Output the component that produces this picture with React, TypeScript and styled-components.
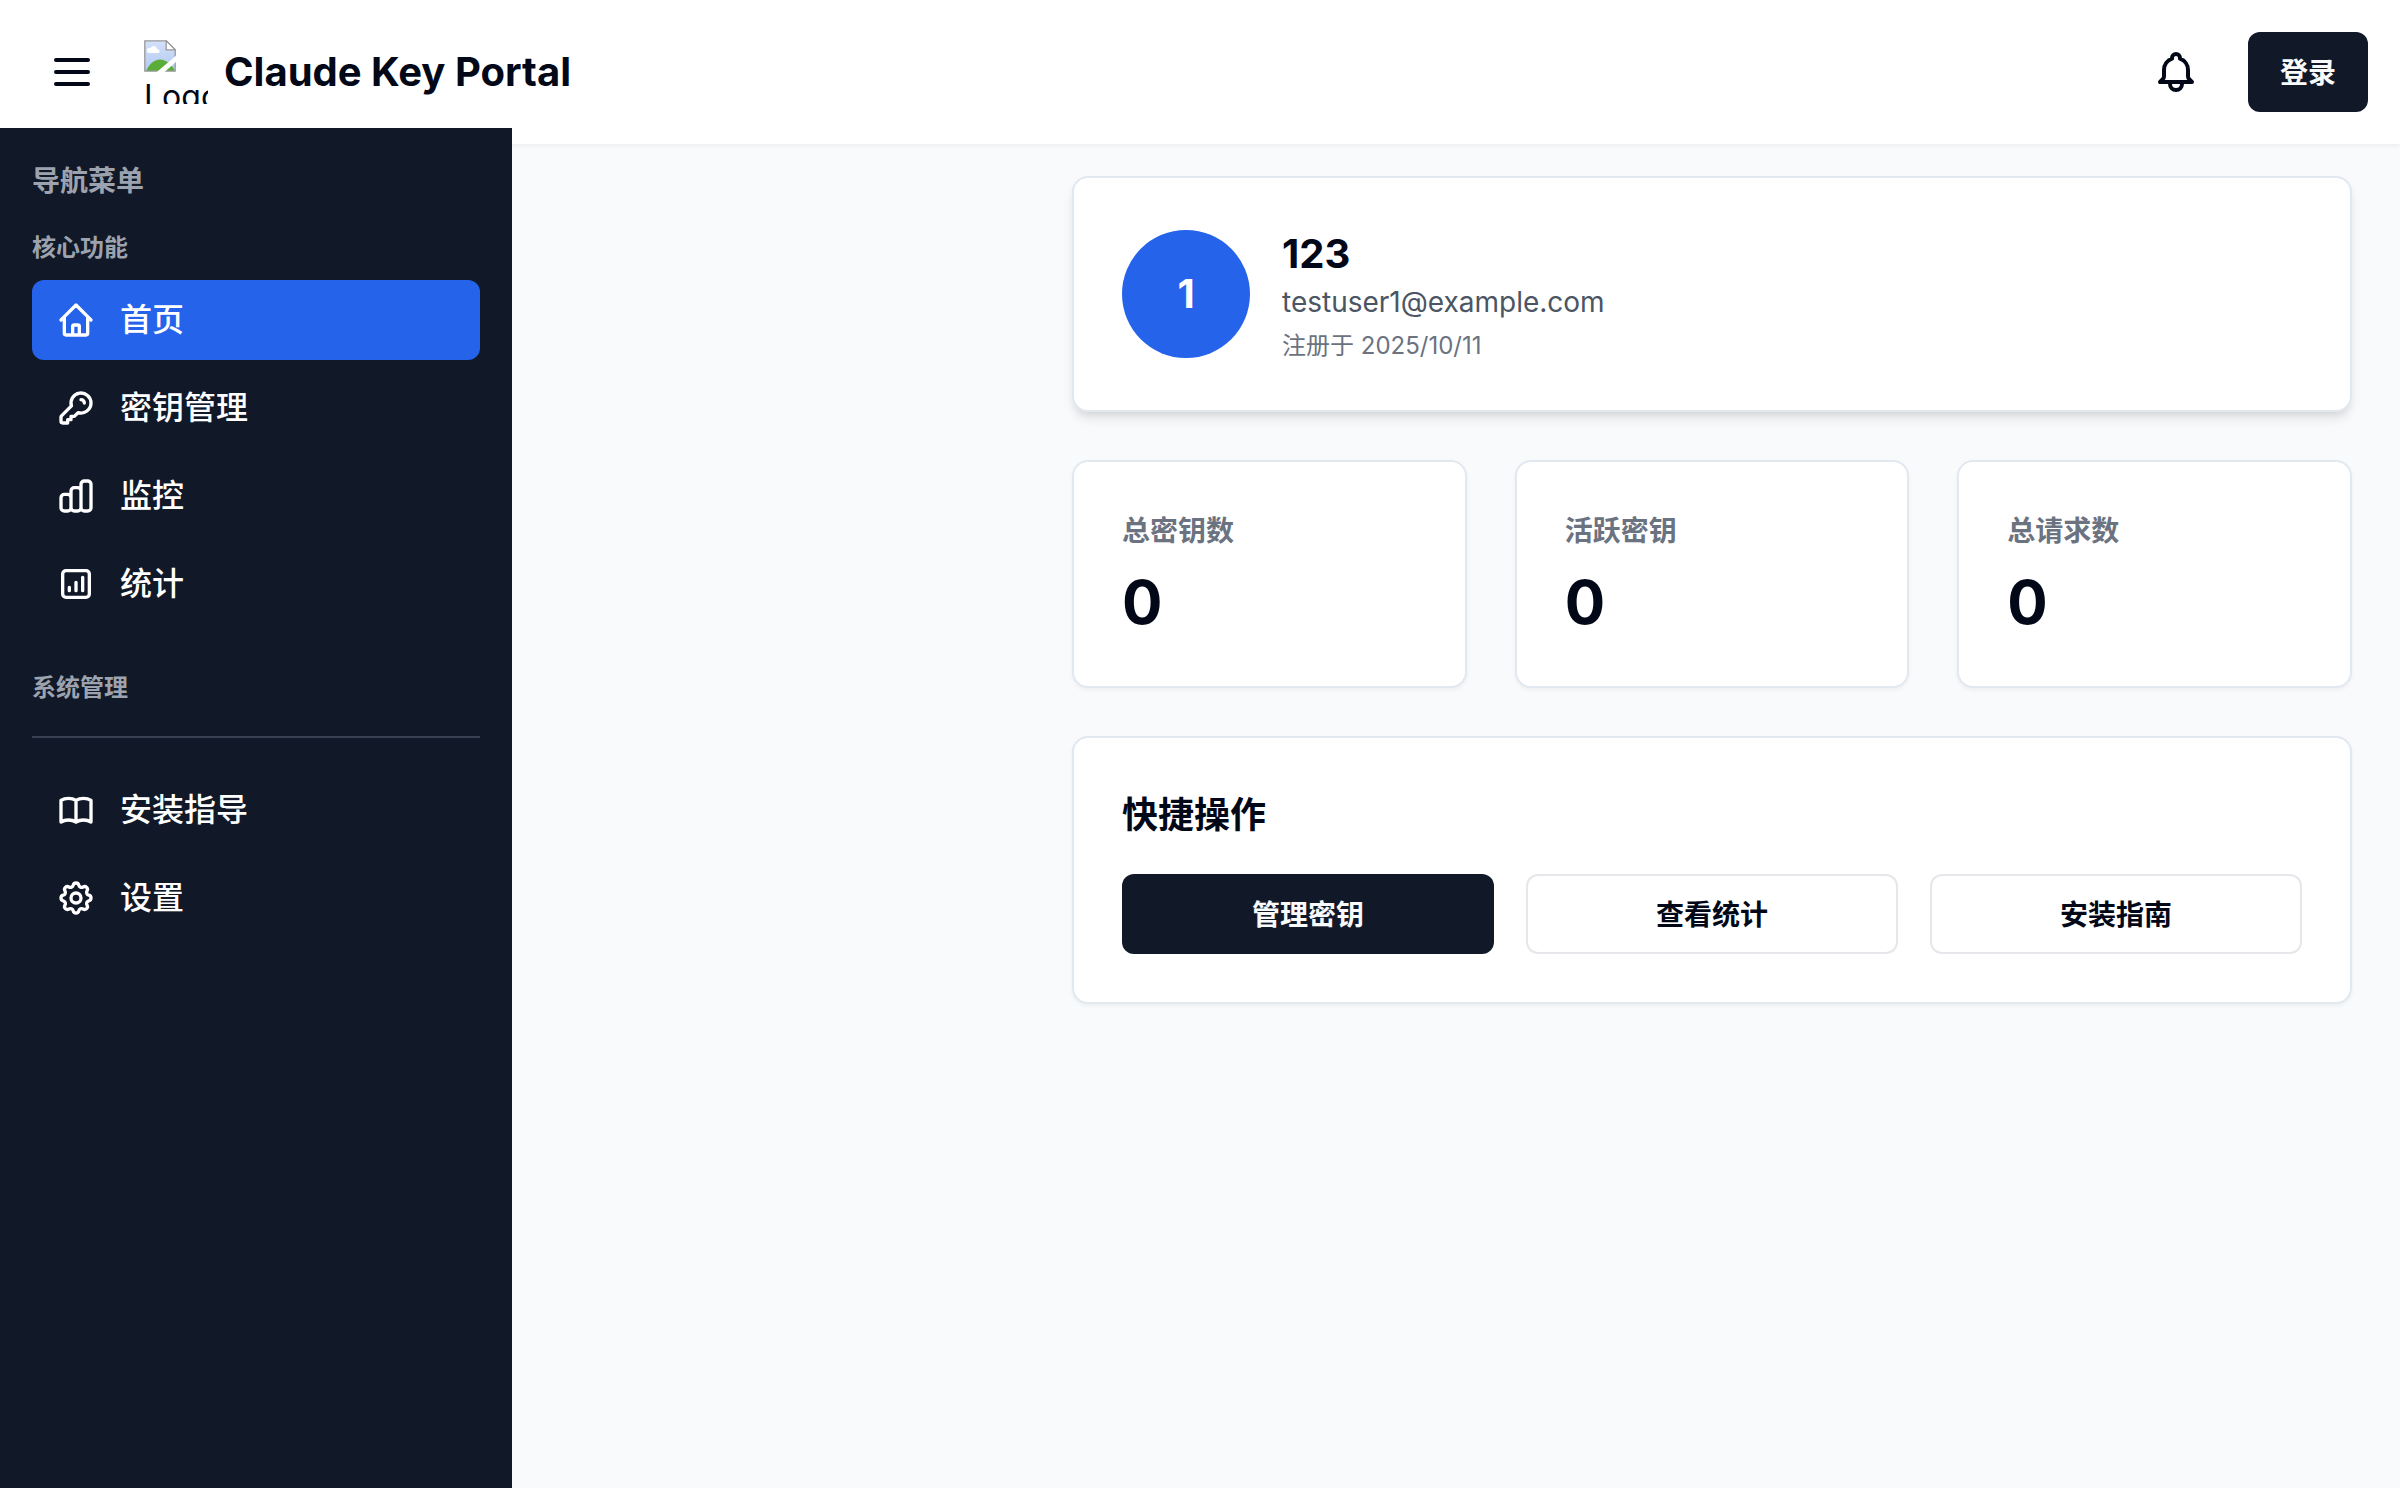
import React from "react";
import styled, { createGlobalStyle, css } from "styled-components";

const GlobalStyle = createGlobalStyle`
  *, *::before, *::after { box-sizing: border-box; }
  html, body { margin: 0; padding: 0; }
  body {
    background: #f9fafb;
    color: #020817;
    font-family: Inter, "Noto Sans CJK SC", sans-serif;
    font-size: 32px;
    line-height: 48px;
    -webkit-font-smoothing: antialiased;
  }
  h1, h2, p { margin: 0; }
  button { font-family: inherit; cursor: pointer; }
`;

const ICONS = {
  menu: "M4 6h16M4 12h16M4 18h16",
  bell: "M15 17h5l-1.405-1.405A2.032 2.032 0 0118 14.158V11a6.002 6.002 0 00-4-5.659V5a2 2 0 10-4 0v.341C7.67 6.165 6 8.388 6 11v3.159c0 .538-.214 1.055-.595 1.436L4 17h5m6 0v1a3 3 0 11-6 0v-1m6 0H9",
  home: "M3 12l2-2m0 0l7-7 7 7M5 10v10a1 1 0 001 1h3m10-11l2 2m-2-2v10a1 1 0 01-1 1h-3m-6 0a1 1 0 001-1v-4a1 1 0 011-1h2a1 1 0 011 1v4a1 1 0 001 1m-6 0h6",
  key: "M15 7a2 2 0 012 2m4 0a6 6 0 01-7.743 5.743L11 17H9v2H7v2H4a1 1 0 01-1-1v-2.586a1 1 0 01.293-.707l5.964-5.964A6 6 0 1121 9z",
  monitor:
    "M9 19v-6a2 2 0 00-2-2H5a2 2 0 00-2 2v6a2 2 0 002 2h2a2 2 0 002-2zm0 0V9a2 2 0 012-2h2a2 2 0 012 2v10m-6 0a2 2 0 002 2h2a2 2 0 002-2m0 0V5a2 2 0 012-2h2a2 2 0 012 2v14a2 2 0 01-2 2h-2a2 2 0 01-2-2z",
  stats:
    "M16 8v8m-4-5v5m-4-2v2m-2 4h12a2 2 0 002-2V6a2 2 0 00-2-2H6a2 2 0 00-2 2v12a2 2 0 002 2z",
  book: "M12 6.253v13m0-13C10.832 5.477 9.246 5 7.5 5S4.168 5.477 3 6.253v13C4.168 18.477 5.754 18 7.5 18s3.332.477 4.5 1.253m0-13C13.168 5.477 14.754 5 16.5 5c1.747 0 3.332.477 4.5 1.253v13C19.832 18.477 18.247 18 16.5 18c-1.746 0-3.332.477-4.5 1.253",
  settings:
    "M10.325 4.317c.426-1.756 2.924-1.756 3.35 0a1.724 1.724 0 002.573 1.066c1.543-.94 3.31.826 2.37 2.37a1.724 1.724 0 001.065 2.572c1.756.426 1.756 2.924 0 3.35a1.724 1.724 0 00-1.066 2.573c.94 1.543-.826 3.31-2.37 2.37a1.724 1.724 0 00-2.572 1.065c-.426 1.756-2.924 1.756-3.35 0a1.724 1.724 0 00-2.573-1.066c-1.543.94-3.31-.826-2.37-2.37a1.724 1.724 0 00-1.065-2.572c-1.756-.426-1.756-2.924 0-3.35a1.724 1.724 0 001.066-2.573c-.94-1.543.826-3.31 2.37-2.37.996.608 2.296.07 2.572-1.065z M15 12a3 3 0 11-6 0 3 3 0 016 0z",
};
type IconName = keyof typeof ICONS;

const IconSvg = styled.svg<{ $size: number }>`
  display: block;
  flex: none;
  width: ${(p) => p.$size}px;
  height: ${(p) => p.$size}px;
  fill: none;
  stroke: currentColor;
  stroke-width: 2;
  stroke-linecap: round;
  stroke-linejoin: round;
`;

const Icon = ({ name, size }: { name: IconName; size: number }) => (
  <IconSvg $size={size} viewBox="0 0 24 24" aria-hidden="true">
    <path d={ICONS[name]} />
  </IconSvg>
);

const Page = styled.div`
  display: flex;
  flex-direction: column;
  height: 1488px;
  overflow: hidden;
`;

const Header = styled.header`
  flex: none;
  display: flex;
  align-items: center;
  justify-content: space-between;
  height: 144px;
  padding: 0 32px;
  background: #fff;
  box-shadow: 0 2px 4px 0 rgba(0, 0, 0, 0.05);
`;

const HeaderGroup = styled.div`
  display: flex;
  align-items: center;
  gap: 32px;
`;

const IconButton = styled.button`
  display: flex;
  padding: 16px;
  border: 0;
  border-radius: 12px;
  background: transparent;
  color: inherit;
`;

const Brand = styled.div`
  display: flex;
  align-items: center;
  gap: 16px;
`;

const LogoBox = styled.div`
  display: flex;
  flex-direction: column;
  width: 64px;
  height: 64px;
  overflow: hidden;
`;

const LogoPicture = styled.svg`
  display: block;
  flex: none;
  width: 32px;
  height: 32px;
`;

const LogoAlt = styled.span`
  flex: none;
  margin-top: 1px;
  white-space: nowrap;
`;

const BrandName = styled.h1`
  font-size: 40px;
  line-height: 56px;
  font-weight: 700;
`;

const Button = styled.button<{ $primary?: boolean }>`
  display: flex;
  align-items: center;
  justify-content: center;
  height: 80px;
  padding: 2px 32px 0;
  border-radius: 12px;
  font-size: 28px;
  line-height: 40px;
  font-weight: 600;
  white-space: nowrap;
  ${(p) =>
    p.$primary
      ? css`
          border: 0;
          background: #111827;
          color: #f8fafc;
        `
      : css`
          border: 2px solid #e5e7eb;
          background: #fff;
          color: #020817;
        `}
`;

const Body = styled.div`
  flex: 1;
  display: flex;
  min-height: 0;
`;

const Sidebar = styled.aside`
  flex: none;
  display: flex;
  flex-direction: column;
  width: 512px;
  margin-top: -16px;
  padding: 33px 32px 32px;
  z-index: 1;
  background: #111827;
  color: #fff;
`;

const SidebarTitle = styled.h2`
  margin-bottom: 31px;
  font-size: 28px;
  line-height: 40px;
  font-weight: 600;
  color: #9ca3af;
`;

const SectionLabel = styled.p<{ $spaced?: boolean }>`
  margin: ${(p) => (p.$spaced ? "48px 0 32px" : "0 0 16px")};
  font-size: 24px;
  line-height: 32px;
  font-weight: 600;
  color: #9ca3af;
`;

const NavList = styled.nav`
  display: flex;
  flex-direction: column;
  gap: 8px;
`;

const NavItem = styled.a<{ $active?: boolean }>`
  display: flex;
  align-items: center;
  gap: 24px;
  height: 80px;
  padding: 0 24px;
  border-radius: 12px;
  background: ${(p) => (p.$active ? "#2563eb" : "transparent")};
  font-weight: 500;
`;

const Divider = styled.hr`
  width: 100%;
  height: 2px;
  margin: 0 0 32px;
  border: 0;
  background: #374151;
`;

const Main = styled.main`
  flex: 1;
  display: flex;
  justify-content: flex-end;
  padding: 32px 48px;
`;

const Content = styled.div`
  display: flex;
  flex-direction: column;
  gap: 48px;
  width: 1280px;
`;

const Card = styled.section<{ $raised?: boolean }>`
  padding: 48px;
  border: 2px solid #e2e8f0;
  border-radius: 16px;
  background: #fff;
  box-shadow: ${(p) =>
    p.$raised
      ? "0 8px 12px -2px rgba(0, 0, 0, 0.1), 0 4px 8px -4px rgba(0, 0, 0, 0.1)"
      : "0 2px 4px 0 rgba(0, 0, 0, 0.05)"};
`;

const Profile = styled.div`
  display: flex;
  align-items: center;
  gap: 32px;
`;

const Avatar = styled.div`
  display: flex;
  align-items: center;
  justify-content: center;
  width: 128px;
  height: 128px;
  border-radius: 50%;
  background: #2563eb;
  color: #fff;
  font-size: 40px;
  font-weight: 700;
`;

const UserName = styled.h2`
  font-size: 40px;
  line-height: 56px;
  font-weight: 700;
`;

const UserEmail = styled.p`
  font-size: 28px;
  line-height: 40px;
  color: #4b5563;
`;

const UserSince = styled.p`
  margin-top: 8px;
  font-size: 24px;
  line-height: 32px;
  color: #6b7280;
`;

const Grid = styled.div<{ $gap: number }>`
  display: grid;
  grid-template-columns: repeat(3, 1fr);
  gap: ${(p) => p.$gap}px;
`;

const StatLabel = styled.p`
  padding-top: 1px;
  font-size: 28px;
  line-height: 40px;
  font-weight: 600;
  color: #6b7280;
`;

const StatValue = styled.p`
  margin-top: 15px;
  font-size: 60px;
  line-height: 72px;
  font-weight: 700;
`;

const CardTitle = styled.h2`
  padding-top: 1px;
  margin-bottom: 31px;
  font-size: 36px;
  line-height: 56px;
  font-weight: 600;
`;

const coreItems: { icon: IconName; label: string; active?: boolean }[] = [
  { icon: "home", label: "首页", active: true },
  { icon: "key", label: "密钥管理" },
  { icon: "monitor", label: "监控" },
  { icon: "stats", label: "统计" },
];

const systemItems: { icon: IconName; label: string }[] = [
  { icon: "book", label: "安装指导" },
  { icon: "settings", label: "设置" },
];

const stats = [
  { label: "总密钥数", value: 0 },
  { label: "活跃密钥", value: 0 },
  { label: "总请求数", value: 0 },
];

const Logo = () => (
  <LogoBox>
    <LogoPicture viewBox="0 0 32 32" aria-hidden="true">
      <defs>
        <linearGradient id="sky" x1="0" y1="0" x2="0" y2="1">
          <stop offset="0" stopColor="#d3e1fb" />
          <stop offset="1" stopColor="#b3c9f0" />
        </linearGradient>
      </defs>
      <path d="M.8.8h21.4l9 9v21.4H.8z" fill="url(#sky)" />
      <path d="M2 31c3-6.500 8-11.500 14-11.500S28 24.500 31 31z" fill="#5aae38" />
      <path d="M5.500 13a2.500 2.500 0 01-.3-5c1.300-.2 2-.5 2.600-1.300C9 5.400 11.800 5.700 12.600 8c.3.900.9 1.200 1.800 1.500 2 .8 1.500 3.500-.6 3.500z" fill="#fff" />
      <path d="M.8.8h21.4l9 9v21.4H.8z" fill="none" stroke="#999" strokeWidth="1.300" />
      <path d="M22.200.8v9h9z" fill="#fff" stroke="#999" strokeWidth="1.300" />
      <path d="M12.800 32L32 15.800v6.200L20.500 32z" fill="#fff" />
    </LogoPicture>
    <LogoAlt>Logo</LogoAlt>
  </LogoBox>
);

export default function App() {
  return (
    <Page>
      <GlobalStyle />
      <Header>
        <HeaderGroup>
          <IconButton aria-label="菜单">
            <Icon name="menu" size={48} />
          </IconButton>
          <Brand>
            <Logo />
            <BrandName>Claude Key Portal</BrandName>
          </Brand>
        </HeaderGroup>
        <HeaderGroup>
          <IconButton aria-label="通知">
            <Icon name="bell" size={48} />
          </IconButton>
          <Button $primary>登录</Button>
        </HeaderGroup>
      </Header>
      <Body>
        <Sidebar>
          <SidebarTitle>导航菜单</SidebarTitle>
          <SectionLabel>核心功能</SectionLabel>
          <NavList>
            {coreItems.map((item) => (
              <NavItem key={item.label} $active={item.active}>
                <Icon name={item.icon} size={40} />
                {item.label}
              </NavItem>
            ))}
          </NavList>
          <SectionLabel $spaced>系统管理</SectionLabel>
          <Divider />
          <NavList>
            {systemItems.map((item) => (
              <NavItem key={item.label}>
                <Icon name={item.icon} size={40} />
                {item.label}
              </NavItem>
            ))}
          </NavList>
        </Sidebar>
        <Main>
          <Content>
            <Card $raised>
              <Profile>
                <Avatar>1</Avatar>
                <div>
                  <UserName>123</UserName>
                  <UserEmail>testuser1@example.com</UserEmail>
                  <UserSince>注册于 2025/10/11</UserSince>
                </div>
              </Profile>
            </Card>
            <Grid $gap={48}>
              {stats.map((stat) => (
                <Card key={stat.label}>
                  <StatLabel>{stat.label}</StatLabel>
                  <StatValue>{stat.value}</StatValue>
                </Card>
              ))}
            </Grid>
            <Card>
              <CardTitle>快捷操作</CardTitle>
              <Grid $gap={32}>
                <Button $primary>管理密钥</Button>
                <Button>查看统计</Button>
                <Button>安装指南</Button>
              </Grid>
            </Card>
          </Content>
        </Main>
      </Body>
    </Page>
  );
}
